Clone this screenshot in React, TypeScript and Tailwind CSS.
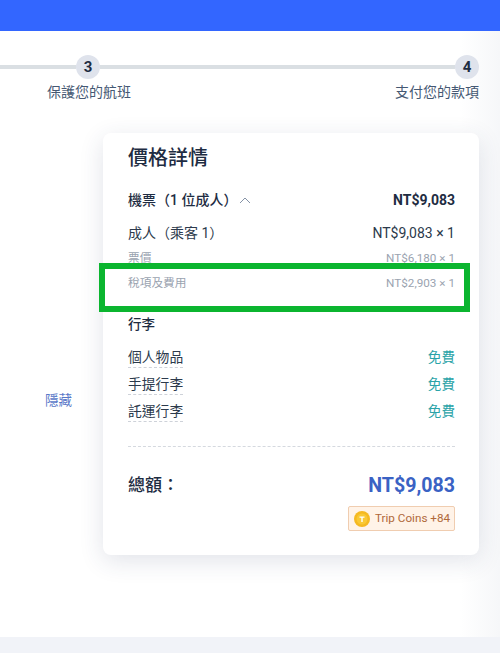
function FeeRow({ label, value }: { label: string; value: string }) {
  return (
    <div className="flex justify-between items-center h-[27px]">
      <span className="text-[13.8px] leading-[19px] text-[#2c3a4c] border-b border-dashed border-[#ced2d9]">{label}</span>
      <span className="text-[13.6px] leading-[19px] text-[#2aa3a8]">{value}</span>
    </div>
  );
}

export default function App() {
  return (
    <div className="relative w-[500px] h-[653px] overflow-hidden flex flex-col bg-white font-['Roboto','Noto_Sans_CJK_TC',sans-serif]">
      <div className="h-[31px] shrink-0 bg-[#3366ff]" />

      <div className="flex-1 flex flex-col bg-gradient-to-r from-white from-[92%] to-[#f6f7f9]">
        {/* stepper */}
        <div className="flex items-center pt-[24px] pr-[21px]">
          <div className="w-[76px] h-1 bg-[#dadfe3]" />
          <div className="w-6 h-6 rounded-full bg-[#dfe3ec] flex items-center justify-center text-[15px] font-bold text-[#1e2c42]">3</div>
          <div className="flex-1 h-1 bg-[#dadfe3]" />
          <div className="w-6 h-6 rounded-full bg-[#dfe3ec] flex items-center justify-center text-[15px] font-bold text-[#1e2c42]">4</div>
        </div>
        <div className="flex justify-between pl-[47px] pr-[21px] pt-[3px] text-[14px] leading-[20px] text-[#455873]">
          <span>保護您的航班</span>
          <span>支付您的款項</span>
        </div>

        <div className="flex mt-[31px]">
          <div className="w-[103px] shrink-0 pl-[45px] pt-[255px]">
            <span className="text-[13.5px] leading-[20px] text-[#5a78c8]">隱藏</span>
          </div>

          {/* price card */}
          <div className="w-[376px] h-[422px] rounded-lg bg-white shadow-[0_6px_24px_rgba(40,60,100,0.14)] pl-[25px] pr-[24px] pt-[12px]">
            <h2 className="text-[20px] leading-[27px] font-medium text-[#1e2c42]">價格詳情</h2>

            <div className="flex justify-between items-center mt-[16px] h-[24px]">
              <div className="flex items-center">
                <span className="text-[14px] font-medium text-[#1e2c42]">機票（1 位成人）</span>
                <svg width="12" height="7" viewBox="0 0 12 7" fill="none" className="ml-[2px]">
                  <path d="M1 6l5-5 5 5" stroke="#8592a6" strokeWidth="1" />
                </svg>
              </div>
              <span className="text-[14px] font-bold text-[#1e2c42]">NT$9,083</span>
            </div>

            <div className="flex justify-between items-center mt-[10px] h-[22px] text-[14px] text-[#2c3a4c]">
              <span>成人（乘客 1）</span>
              <span>NT$9,083 × 1</span>
            </div>
            <div className="flex justify-between items-center mt-[4px] h-[22px] text-[11.7px] text-[#9aa3b0]">
              <span>票價</span>
              <span>NT$6,180 × 1</span>
            </div>
            <div className="flex justify-between items-center mt-[3px] h-[22px] text-[11.7px] text-[#9aa3b0]">
              <span>稅項及費用</span>
              <span>NT$2,903 × 1</span>
            </div>

            <div className="mt-[19px] text-[13.5px] leading-[20px] font-medium text-[#1e2c42]">行李</div>
            <div className="mt-[10px]">
              <FeeRow label="個人物品" value="免費" />
              <FeeRow label="手提行李" value="免費" />
              <FeeRow label="託運行李" value="免費" />
            </div>

            <div className="mt-[21px] border-t border-dashed border-[#d5d9df]" />

            <div className="flex justify-between items-center mt-[24px] h-[30px]">
              <span className="text-[17px] font-medium text-[#1e2c42]">總額：</span>
              <span className="text-[19.6px] font-bold text-[#3a62c4]">NT$9,083</span>
            </div>
            <div className="flex justify-end mt-[5px]">
              <div className="flex items-center h-[25px] w-[107px] px-[5px] gap-[5px] rounded-[2px] bg-[#fff3e8] border border-[#f0cdb0] text-[11.7px] text-[#b0683a] whitespace-nowrap">
                <svg width="16" height="16" viewBox="0 0 16 16" className="shrink-0">
                  <circle cx="8" cy="8" r="8" fill="#f5b921" />
                  <circle cx="8" cy="8" r="5.5" fill="#f9c935" />
                  <path d="M5.5 5.5h5v1.2H8.7V11H7.3V6.7H5.5z" fill="#fff" />
                </svg>
                <span>Trip Coins +84</span>
              </div>
            </div>
          </div>
        </div>
      </div>

      <div className="h-[16px] shrink-0 bg-[#f1f3f8]" />

      {/* annotation box */}
      <div className="absolute left-[99px] top-[263px] w-[371px] h-[49px] border-[6px] border-[#0bb52f]" />
    </div>
  );
}
